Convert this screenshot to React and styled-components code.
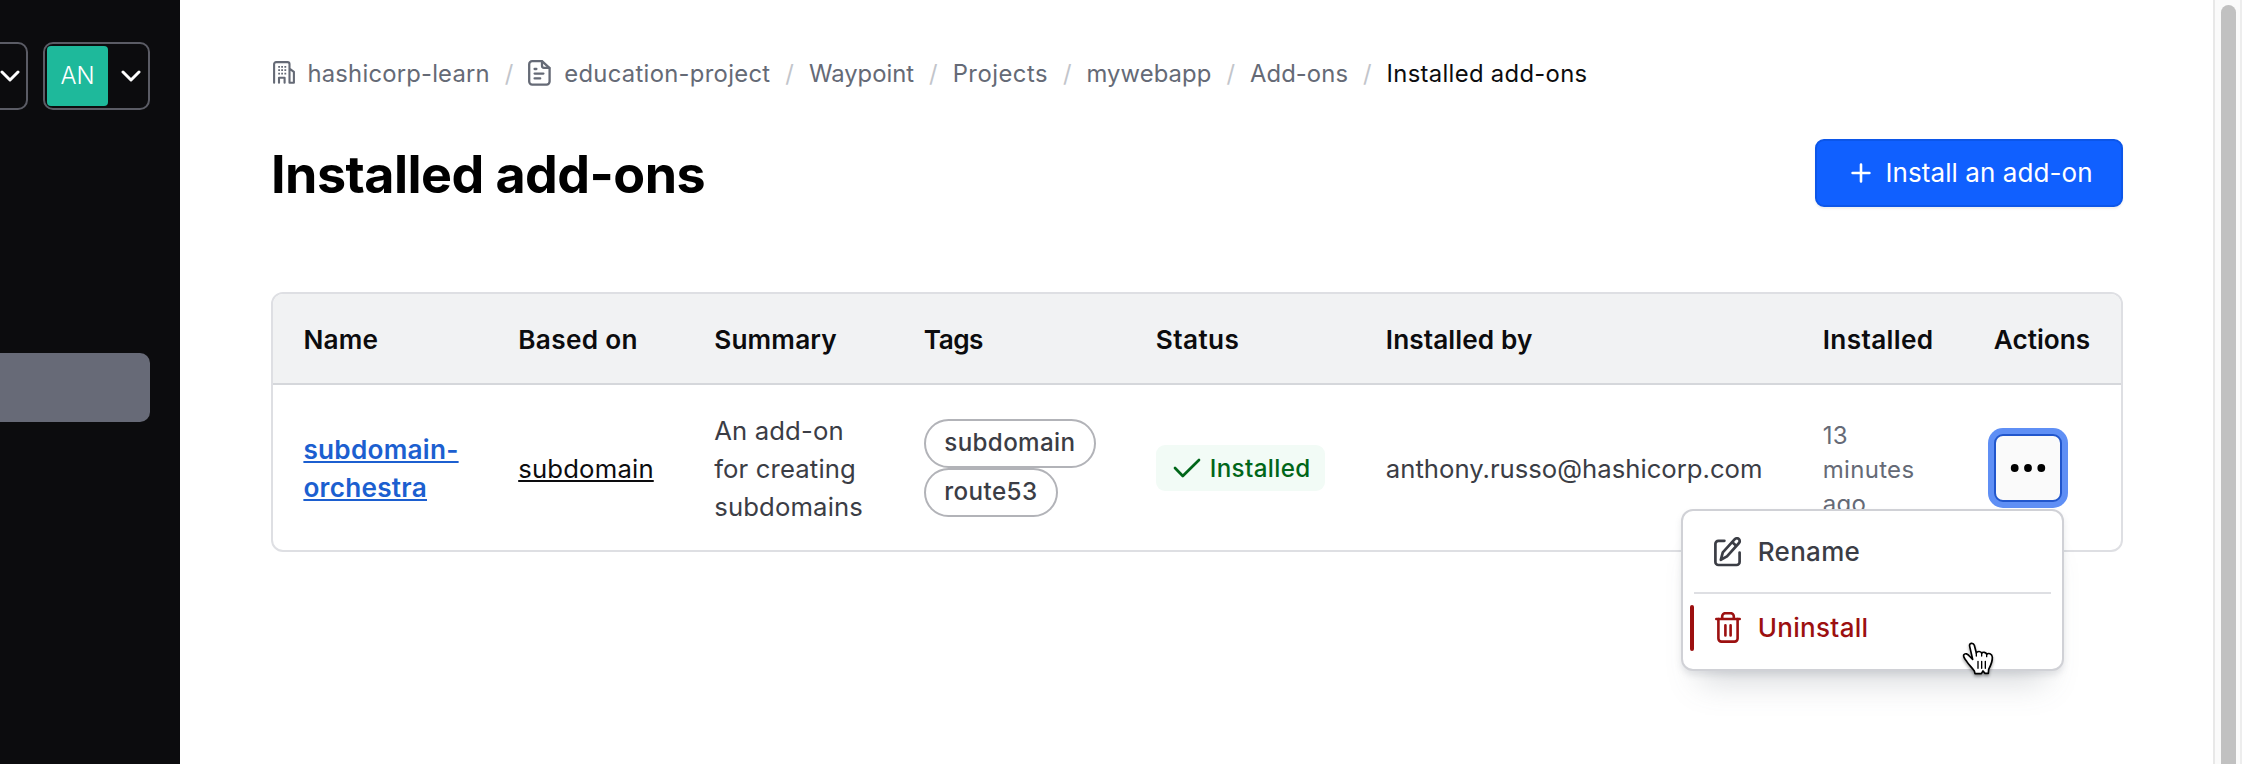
import React from "react";
import styled, { createGlobalStyle, css } from "styled-components";

const GlobalStyle = createGlobalStyle`
  *, *::before, *::after { box-sizing: border-box; }
  body {
    margin: 0;
    background: #ffffff;
    color: #3b3d45;
    font-family: Inter, "Liberation Sans", sans-serif;
    overflow: hidden;
  }
  svg { display: block; flex: none; }
`;

const Page = styled.div`
  position: relative;
  display: flex;
  width: 2242px;
  height: 764px;
  overflow: hidden;
`;

/* ---------- sidebar ---------- */

const Sidebar = styled.aside`
  flex: none;
  width: 180px;
  padding-top: 42px;
  background: #0c0c0e;
  overflow: hidden;
`;

const SidebarHeader = styled.div`
  display: flex;
  gap: 15px;
  height: 68px;
  margin-left: -20px;
`;

const HeaderMenuButton = styled.button`
  display: flex;
  align-items: center;
  flex: none;
  width: ${(p) => p.$width}px;
  height: 68px;
  padding: 2px;
  border: 2px solid #5b5c65;
  border-radius: 10px;
  background: transparent;
`;

const ChevronSlot = styled.span`
  display: flex;
  flex: 1;
  justify-content: center;
  padding: ${(p) => p.$pad};
`;

const Avatar = styled.span`
  display: flex;
  align-items: center;
  justify-content: center;
  width: 61px;
  height: 60px;
  border-radius: 4px;
  background: #1eb99b;
  color: #ffffff;
  font: 300 23.8px/30px Inter, sans-serif;
`;

const ActiveNavItem = styled.div`
  width: 150px;
  height: 69px;
  margin-top: 243px;
  border-radius: 0 10px 10px 0;
  background: #676a77;
`;

/* ---------- main ---------- */

const Main = styled.main`
  flex: 1;
  min-width: 0;
  padding: 54px 90px 0 91px;
  background: #ffffff;
`;

const Breadcrumb = styled.nav`
  display: flex;
  align-items: center;
  gap: 15.25px;
  height: 38px;
  padding-left: 1.5px;
  font-size: 23.8px;
  line-height: 38px;
  white-space: nowrap;
`;

const Crumb = styled.span`
  display: flex;
  align-items: center;
  gap: 13px;
  color: ${(p) => (p.$current ? "#0c0c0e" : "#656a76")};
  letter-spacing: ${(p) => p.$track || 0}px;
`;

const CrumbLabel = styled.span`
  padding-top: 2px;
`;

const Slash = styled.span`
  display: flex;
  justify-content: center;
  width: 8px;
  padding-top: 2px;
  color: #c2c5cb;
`;

const PageHeader = styled.header`
  display: flex;
  align-items: center;
  justify-content: space-between;
  height: 68px;
  margin-top: 47px;
`;

const Title = styled.h1`
  margin: 0;
  padding-top: 4px;
  color: #000000;
  font-size: 52px;
  font-weight: 700;
  line-height: 66px;
  letter-spacing: -0.54px;
  white-space: nowrap;
`;

const PrimaryButton = styled.button`
  display: flex;
  align-items: center;
  gap: 14.5px;
  width: 308px;
  height: 68px;
  padding: 0 0 1px 34px;
  border: 2px solid #0c56e9;
  border-radius: 9px;
  background: #1060ff;
  box-shadow: 0 2px 2px rgba(101, 106, 118, 0.1);
  color: #ffffff;
  font: 400 26px/36px Inter, sans-serif;
  letter-spacing: 0.08px;
  white-space: nowrap;
`;

/* ---------- table ---------- */

const rowGrid = css`
  display: grid;
  grid-template-columns: 214.8px 196px 209.6px 232px 230px 437px 171px 1fr;
`;

const Table = styled.section`
  height: 260px;
  margin-top: 85px;
  border: 2px solid #dedfe3;
  border-radius: 12px;
`;

const HeadRow = styled.div`
  ${rowGrid}
  height: 91px;
  border-bottom: 2px solid #d5d7db;
  border-radius: 10px 10px 0 0;
  background: #f1f2f3;
`;

const HeadCell = styled.div`
  display: flex;
  align-items: center;
  padding: 1px 0 0 30.4px;
  color: #0c0c0e;
  font-size: 26.2px;
  font-weight: 600;
  letter-spacing: ${(p) => p.$track || 0}px;
  white-space: nowrap;
`;

const BodyRow = styled.div`
  ${rowGrid}
  height: 165px;
`;

const Cell = styled.div`
  display: flex;
  align-items: center;
  padding: 1px 0 0 30.4px;
  font-size: 25.7px;
  line-height: 38px;
  white-space: nowrap;
`;

const CellText = styled.div`
  padding-top: 1px;
  letter-spacing: ${(p) => p.$track || 0}px;
`;

const Link = styled.a`
  color: ${(p) => (p.$strong ? "#1c5fd0" : "#0c0c0e")};
  font-size: ${(p) => (p.$strong ? 26.2 : 25.7)}px;
  font-weight: ${(p) => (p.$strong ? 600 : 400)};
  letter-spacing: ${(p) => p.$track}px;
  text-decoration: underline;
  text-decoration-thickness: 2px;
  text-underline-offset: 2px;
`;

const TagList = styled.div`
  display: flex;
  flex-direction: column;
  align-items: flex-start;
`;

const Tag = styled.span`
  display: flex;
  align-items: center;
  height: 49.25px;
  padding: 0 18.5px 1px;
  border: 2px solid #b2b3b8;
  border-radius: 25px;
  font-size: 24.2px;
  font-weight: 500;
  letter-spacing: ${(p) => p.$track}px;
`;

const Badge = styled.span`
  display: flex;
  align-items: center;
  gap: 8px;
  height: 46px;
  padding: 0 14px 0 16px;
  border-radius: 9px;
  background: #f2fbf6;
  color: #006619;
  font-size: 24.2px;
  font-weight: 500;
  letter-spacing: 0.35px;
`;

const BadgeText = styled.span`
  padding-top: 2px;
`;

const Time = styled.div`
  padding-top: 4px;
  color: #656a76;
  font-size: 24px;
  line-height: 34px;
  letter-spacing: 0.3px;
`;

const Actions = styled.div`
  position: relative;
`;

const MoreButton = styled.button`
  display: flex;
  align-items: center;
  justify-content: center;
  width: 68px;
  height: 68px;
  padding: 0;
  border: 2px solid #2156cc;
  border-radius: 9px;
  background: #fafafa;
  box-shadow: 0 0 0 6px #5f8ff5;
`;

/* ---------- dropdown menu ---------- */

const Menu = styled.div`
  position: absolute;
  z-index: 1;
  top: 75px;
  right: -2px;
  width: 383px;
  height: 162px;
  border: 2px solid #d0d1d6;
  border-radius: 12px;
  background: #ffffff;
  box-shadow: 0 4px 6px rgba(101, 106, 118, 0.15),
    0 30px 30px -19px rgba(101, 106, 118, 0.25);
`;

const MenuItem = styled.div`
  position: relative;
  display: flex;
  align-items: center;
  gap: 15px;
  height: ${(p) => p.$height}px;
  padding-left: 30px;
  color: ${(p) => (p.$critical ? "#9c1010" : "#3b3d45")};
  font-size: 26px;
  font-weight: 500;
  letter-spacing: 0.3px;
`;

const MenuDivider = styled.div`
  height: 2px;
  margin: 0 11px;
  background: #dedfe3;
`;

const HoverBar = styled.span`
  position: absolute;
  top: 11px;
  left: 7px;
  width: 4px;
  height: 46px;
  border-radius: 2px;
  background: #9c1010;
`;

const Pointer = styled.svg`
  position: absolute;
  z-index: 2;
  left: 1962px;
  top: 642px;
  filter: drop-shadow(0 2px 1.5px rgba(0, 0, 0, 0.35));
`;

/* ---------- scrollbar ---------- */

const ScrollTrack = styled.div`
  flex: none;
  width: 29px;
  padding: 5px 5px 0 6px;
  border-left: 2px solid #e8e8e8;
  border-right: 2px solid #ededed;
  background: #fafafa;
`;

const ScrollThumb = styled.div`
  width: 15px;
  height: 780px;
  border-radius: 8px;
  background: #c1c1c1;
`;

/* ---------- icons ---------- */

const Chevron = () => (
  <svg width="20" height="12" viewBox="0 0 20 12" fill="none" stroke="#fff" strokeWidth="3" strokeLinecap="round" strokeLinejoin="round">
    <path d="M2 2l8 8 8-8" />
  </svg>
);

const OrgIcon = () => (
  <svg width="22" height="24" viewBox="0 0 22 24" fill="none" stroke="#656a76" strokeWidth="2.1" strokeLinecap="round" strokeLinejoin="round">
    <path d="M1.1 21.8V3.1a2 2 0 0 1 2-2h11.4a2 2 0 0 1 2 2v18.7h4.4v-11L16.5 7.6" />
    <path d="M6 21.8v-5h5.6v5" />
    <path d="M5.2 5.8h1.8M8.2 5.8h1.8M11.4 5.8h1.8M5.2 9.2h1.8M8.2 9.2h1.8M11.4 9.2h1.8M5.2 12.6h1.8M8.2 12.6h1.8M11.4 12.6h1.8" strokeWidth="1.8" strokeLinecap="butt" />
  </svg>
);

const FileIcon = () => (
  <svg width="23" height="26" viewBox="0 0 23 26" fill="none" stroke="#656a76" strokeWidth="2.3" strokeLinecap="round" strokeLinejoin="round">
    <path d="M14 1.2H4.2a3 3 0 0 0-3 3v17.4a3 3 0 0 0 3 3h14.4a3 3 0 0 0 3-3V8.2z" />
    <path d="M14 1.4v4.4a2 2 0 0 0 2 2h5.4" />
    <path d="M6.6 9h1.8M6.6 13.6h8.8M6.6 18.4h5.6" />
  </svg>
);

const PlusIcon = () => (
  <svg width="20" height="20" viewBox="0 0 20 20" fill="none" stroke="currentColor" strokeWidth="2.6" strokeLinecap="round">
    <path d="M10 1.6v16.8M1.6 10h16.8" />
  </svg>
);

const CheckIcon = () => (
  <svg width="30" height="30" viewBox="0 0 30 30" fill="none" stroke="currentColor" strokeWidth="2.7" strokeLinecap="round" strokeLinejoin="round">
    <path d="M3 15l7.8 8L27 7" />
  </svg>
);

const DotsIcon = () => (
  <svg width="36" height="10" viewBox="0 0 36 10" fill="#000">
    <circle cx="4.7" cy="5" r="3.9" />
    <circle cx="18" cy="5" r="3.9" />
    <circle cx="31.3" cy="5" r="3.9" />
  </svg>
);

const EditIcon = () => (
  <svg width="30" height="30" viewBox="-1 0 30 30" fill="none" stroke="currentColor" strokeWidth="2.7" strokeLinecap="round" strokeLinejoin="round">
    <path d="M10.4 3.8H4.4a3 3 0 0 0-3 3V25a3 3 0 0 0 3 3h18.2a3 3 0 0 0 3-3v-9.4" />
    <path d="M6.8 22.8l2-7.4L20.8 2.2a2.8 2.8 0 0 1 4.2 3.8L13 19.4z" />
    <path d="M18.6 5.4l3 2.8" />
  </svg>
);

const TrashIcon = () => (
  <svg width="30" height="32" viewBox="-2 0 30 32" fill="none" stroke="currentColor" strokeWidth="2.6" strokeLinecap="round" strokeLinejoin="round">
    <path d="M1.3 7h23.4M7.2 7V4.2a3 3 0 0 1 3-3h5.6a3 3 0 0 1 3 3V7" />
    <path d="M3.4 7v19.6a3 3 0 0 0 3 3h13.2a3 3 0 0 0 3-3V7" />
    <path d="M10.4 13.2v10.2M15.6 13.2v10.2" />
  </svg>
);

const HandPointer = () => (
  <Pointer width="32" height="34" viewBox="0 0 96 102">
    <path
      d="M23 13C20 2 34 1 37 10L43 33C46 27 57 27 59 34C62 29 72 30 74 37C79 32 90 35 91 45C92 59 88 67 80 82L79 94L69 94L63 87L58 95L39 95L37 87C29 76 20 68 14 58C8 50 3 44 5 39C9 32 18 36 22 42L32 52Z"
      fill="#fff"
      stroke="#000"
      strokeWidth="5"
      strokeLinejoin="round"
    />
    <path d="M48 58v21M59 58v21M70 58v21M43 33v9M59 34v8M74 37v7" stroke="#000" strokeWidth="4" strokeLinecap="round" />
  </Pointer>
);

const CRUMBS = [
  { label: "hashicorp-learn", track: 0.21, icon: OrgIcon },
  { label: "education-project", track: 0.3, icon: FileIcon },
  { label: "Waypoint", track: 0.02 },
  { label: "Projects", track: 0.5 },
  { label: "mywebapp", track: 0.1 },
  { label: "Add-ons", track: 0.11 },
  { label: "Installed add-ons", track: 0.33, current: true },
];

const COLUMNS = [
  ["Name", 0.2],
  ["Based on", 0.34],
  ["Summary", 0.18],
  ["Tags", -0.5],
  ["Status", 0.4],
  ["Installed by", 0.1],
  ["Installed", 0.34],
  ["Actions", 0],
];

export default function App() {
  return (
    <>
      <GlobalStyle />
      <Page>
        <Sidebar>
          <SidebarHeader>
            <HeaderMenuButton $width={48}>
              <ChevronSlot $pad="0 0 0 12px">
                <Chevron />
              </ChevronSlot>
            </HeaderMenuButton>
            <HeaderMenuButton $width={107}>
              <Avatar>AN</Avatar>
              <ChevronSlot $pad="0 0 0 7px">
                <Chevron />
              </ChevronSlot>
            </HeaderMenuButton>
          </SidebarHeader>
          <ActiveNavItem />
        </Sidebar>

        <Main>
          <Breadcrumb>
            {CRUMBS.map(({ label, track, icon: Icon, current }, i) => (
              <React.Fragment key={label}>
                {i > 0 && <Slash>/</Slash>}
                <Crumb $track={track} $current={current}>
                  {Icon && <Icon />}
                  <CrumbLabel>{label}</CrumbLabel>
                </Crumb>
              </React.Fragment>
            ))}
          </Breadcrumb>

          <PageHeader>
            <Title>Installed add-ons</Title>
            <PrimaryButton>
              <PlusIcon />
              Install an add-on
            </PrimaryButton>
          </PageHeader>

          <Table>
            <HeadRow>
              {COLUMNS.map(([label, track]) => (
                <HeadCell key={label} $track={track}>
                  {label}
                </HeadCell>
              ))}
            </HeadRow>
            <BodyRow>
              <Cell>
                <CellText>
                  <Link $strong $track={0.25}>
                    subdomain-
                    <br />
                    orchestra
                  </Link>
                </CellText>
              </Cell>
              <Cell>
                <CellText>
                  <Link $track={0.18}>subdomain</Link>
                </CellText>
              </Cell>
              <Cell>
                <CellText $track={0.13}>
                  An add-on
                  <br />
                  for creating
                  <br />
                  subdomains
                </CellText>
              </Cell>
              <Cell>
                <TagList>
                  <Tag $track={0.35}>subdomain</Tag>
                  <Tag $track={0.4}>route53</Tag>
                </TagList>
              </Cell>
              <Cell>
                <Badge>
                  <CheckIcon />
                  <BadgeText>Installed</BadgeText>
                </Badge>
              </Cell>
              <Cell>
                <CellText>anthony.russo@hashicorp.com</CellText>
              </Cell>
              <Cell>
                <Time>
                  13
                  <br />
                  minutes
                  <br />
                  ago
                </Time>
              </Cell>
              <Cell>
                <Actions>
                  <MoreButton aria-label="More actions">
                    <DotsIcon />
                  </MoreButton>
                  <Menu>
                    <MenuItem $height={81}>
                      <EditIcon />
                      Rename
                    </MenuItem>
                    <MenuDivider />
                    <MenuItem $height={67} $critical>
                      <HoverBar />
                      <TrashIcon />
                      Uninstall
                    </MenuItem>
                  </Menu>
                </Actions>
              </Cell>
            </BodyRow>
          </Table>
        </Main>

        <ScrollTrack>
          <ScrollThumb />
        </ScrollTrack>
        <HandPointer />
      </Page>
    </>
  );
}
